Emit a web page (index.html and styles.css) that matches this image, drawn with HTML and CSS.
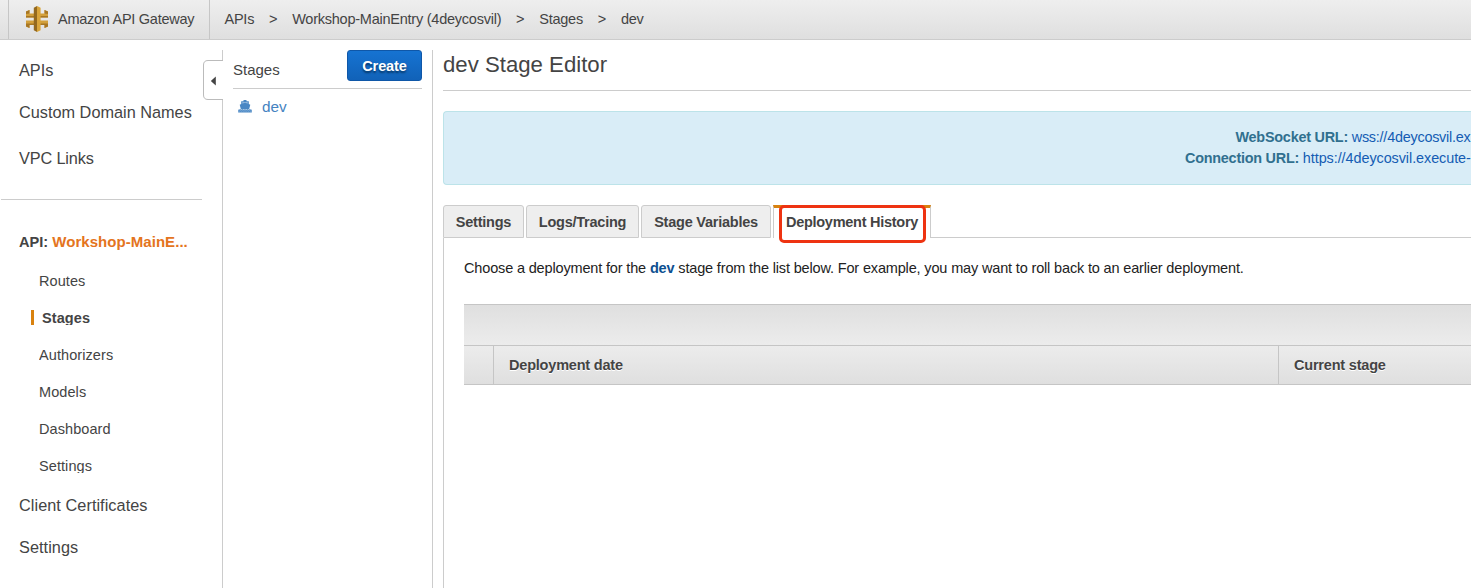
FILE: index.html
```html
<!DOCTYPE html>
<html lang="en">
<head>
<meta charset="utf-8">
<title>Amazon API Gateway</title>
<link rel="stylesheet" href="styles.css">
</head>
<body>
<header class="topbar">
  <div class="brand">
    <svg class="brand-icon" width="22" height="26" viewBox="0 0 22 26">
      <path fill="#d3a03b" d="M0 5.500L3.500 4v3.500H8V5.500h6v2h4.500V4L22 5.500v6H0z"/>
      <path fill="#a87724" d="M0 5.500L3.500 4v3.500L0 8zM22 5.500L18.500 4v3.500L22 8zM0 10h22v1.500H0z"/>
      <path fill="#d3a03b" d="M0 14.500h22v6L18.500 22v-3.500H14v2H8v-2H3.500V22L0 20.500z"/>
      <path fill="#a87724" d="M0 17.500h22v3L18.500 22v-3h-15v3L0 20.500z"/>
      <path fill="#94691f" d="M7.800 1.800L11 0v26l-3.200-1.800z"/>
      <path fill="#d9a43a" d="M11 0l3.600 1.800v22.400L11 26z"/>
    </svg>
    <span>Amazon API Gateway</span>
  </div>
  <nav class="crumbs">
    <span>APIs</span><span class="sep">&gt;</span><span>Workshop-MainEntry (4deycosvil)</span><span class="sep">&gt;</span><span>Stages</span><span class="sep">&gt;</span><span>dev</span>
  </nav>
</header>
<div class="layout">
  <aside class="sidebar">
    <a class="nav apis">APIs</a>
    <a class="nav domains">Custom Domain Names</a>
    <a class="nav links">VPC Links</a>
    <hr class="rule">
    <div class="api-name">API: <span class="orange">Workshop-MainE...</span></div>
    <ul class="sub">
      <li>Routes</li>
      <li class="current">Stages</li>
      <li>Authorizers</li>
      <li>Models</li>
      <li>Dashboard</li>
      <li>Settings</li>
    </ul>
    <a class="nav certs">Client Certificates</a>
    <a class="nav certs">Settings</a>
  </aside>
  <section class="stages">
    <svg class="collapse" width="20" height="40" viewBox="0 0 20 40">
      <path d="M20 .5H5Q.5 .5 .5 5v30Q.5 39.500 5 39.500h15" fill="#fff" stroke="#bbb"/>
      <path d="M12.800 16.500v9L7.800 21z" fill="#444"/>
    </svg>
    <div class="stages-head"><span>Stages</span><button class="create">Create</button></div>
    <div class="stage">
      <svg width="14" height="13" viewBox="0 0 14 13" fill="#4a87c4">
        <path d="M5.500 0h3v1.200h2.300V4l1.500.700L11.200 9H2.800L1.700 4.700 3.200 4V1.200h2.300z"/>
        <path d="M4.300 2.300h5.400v1.300L7 2.800l-2.700.8z" fill="#a9c8e6"/>
        <path d="M.2 9.500q.9.500 1.900-.5 1.200 1.200 2.400 0 1.200 1.200 2.500 0 1.200 1.200 2.500 0 1.200 1.200 2.400 0 1 1 1.900.5v3H.2z"/>
        <path d="M.3 11q1.100.6 2.100-.3 1.200 1 2.300 0 1.200 1 2.300 0 1.200 1 2.300 0 1.200 1 2.300 0 1 .9 2.100.3" fill="none" stroke="#a9c8e6" stroke-width=".5"/>
      </svg>
      <span>dev</span>
    </div>
  </section>
  <main class="editor">
    <h1>dev Stage Editor</h1>
    <div class="info">
      <div class="ws"><b>WebSocket URL:</b> <span>wss://4deycosvil.ex</span></div>
      <div class="conn"><b>Connection URL:</b> <span>https://4deycosvil.execute-</span></div>
    </div>
    <div class="tabs">
      <div class="tab t1">Settings</div>
      <div class="tab t2">Logs/Tracing</div>
      <div class="tab t3">Stage Variables</div>
      <div class="tab active"><span>Deployment History</span><i class="marker"></i></div>
      <div class="tab-fill"></div>
    </div>
    <div class="panel">
      <p>Choose a deployment for the <b>dev</b> stage from the list below. For example, you may want to roll back to an earlier deployment.</p>
      <div class="table">
        <div class="tools"></div>
        <div class="thead"><div></div><div>Deployment date</div><div>Current stage</div></div>
      </div>
    </div>
  </main>
</div>
</body>
</html>
```
FILE: styles.css
```css
* { box-sizing: border-box; }
body { margin: 0; height: 588px; overflow: hidden; background: #fff; color: #444; font: 14.5px/20px "Liberation Sans", Arial, sans-serif; display: flex; flex-direction: column; }
.topbar { height: 40px; flex: none; display: flex; background: linear-gradient(#eee, #dfdfdf); border-bottom: 1px solid #ccc; padding-left: 8px; font-size: 14.5px; letter-spacing: -.27px; }
.brand { width: 202px; border: 1px solid #c6c6c6; border-width: 0 1px; display: flex; align-items: flex-start; white-space: nowrap; }
.brand-icon { margin: 6px 10px 0 17px; }
.brand span, .crumbs span { line-height: 38px; white-space: nowrap; }
.crumbs { display: flex; padding-left: 14.5px; letter-spacing: -.24px; }
.crumbs .sep { width: 38px; text-align: center; }
.layout { flex: 1; display: flex; min-height: 0; }
.sidebar { width: 222px; padding: 20px 0 0 19px; flex: none; }
.nav { display: block; height: 20px; font-size: 16.3px; white-space: nowrap; }
.apis { margin-bottom: 22px; }
.domains { margin-bottom: 26px; }
.links { letter-spacing: -.15px; }
.rule { border: 0; height: 1px; background: #ccc; margin: 31px 20px 0 -18px; }
.api-name { margin-top: 32px; height: 20px; font-weight: bold; font-size: 14.6px; white-space: nowrap; }
.orange { color: #e47420; font-size: 15px; letter-spacing: .05px; }
.sub { list-style: none; margin: 21px 0 22px; padding: 0 0 0 20px; display: grid; gap: 22px; letter-spacing: .08px; }
.sub li { height: 15px; line-height: 16px; overflow: hidden; }
.current { border-left: 3px solid #d9820f; padding-left: 8px; margin-left: -8px; font-weight: bold; }
.certs { margin-bottom: 22px; letter-spacing: .05px; }
.stages { position: relative; width: 211px; flex: none; margin-top: 10px; padding: 0 10px; border: 1px solid #ccc; border-width: 0 1px; }
.collapse { position: absolute; left: -20px; top: 10px; background: #fff; }
.stages-head { height: 39px; border-bottom: 1px solid #ccc; display: flex; justify-content: space-between; font-size: 15px; line-height: 40px; }
.create { width: 75px; height: 31px; padding: 0; border: 1px solid #0f57a8; border-radius: 3px; background: linear-gradient(#1673d2, #1162b8); color: #fff; font: bold 14.5px/30px "Liberation Sans", Arial, sans-serif; letter-spacing: -.1px; text-shadow: 0 2px 2px #063766; }
.stage { display: flex; gap: 10px; padding: 8px 0 0 5px; color: #4583c1; font-size: 15.3px; }
.stage svg { margin-top: 3px; }
.editor { flex: 1; min-width: 0; margin-top: 10px; padding-left: 10px; display: flex; flex-direction: column; }
h1 { margin: 0; height: 41px; border-bottom: 1px solid #ccc; font-size: 22.2px; font-weight: normal; line-height: 29px; }
.info { margin-top: 20px; height: 74px; flex: none; border: 1px solid #bce3e9; border-right: 0; border-radius: 4px 0 0 4px; background: #d9edf7; padding-top: 15px; color: #31708f; font-size: 14.4px; line-height: 21px; letter-spacing: -.23px; white-space: nowrap; overflow: hidden; }
.info span { color: #145cb3; }
.ws { padding-left: 791.5px; }
.conn { padding-left: 741px; }
.conn span { letter-spacing: -.06px; }
.tabs { display: flex; height: 33px; margin-top: 20px; flex: none; letter-spacing: -.23px; }
.tab { height: 33px; margin-right: 2px; border: 1px solid #ccc; border-radius: 3px 3px 0 0; background: #eee; text-align: center; line-height: 32px; font-weight: bold; white-space: nowrap; box-shadow: 2px 32px 0 -31px #ccc; }
.t1 { width: 81px; }
.t2 { width: 113px; }
.t3 { width: 130px; }
.active { position: relative; width: 158px; margin: 0; background: #fff; border-top: 3px solid #d9820f; border-bottom: 0; border-radius: 0; line-height: 28px; box-shadow: none; letter-spacing: -.27px; }
.marker { position: absolute; left: 5px; top: -3px; width: 147px; height: 38px; border: 3px solid #ee3311; border-radius: 5px; }
.tab-fill { flex: 1; border-bottom: 1px solid #ccc; }
.panel { flex: 1; border-left: 1px solid #ccc; padding: 20px 0 0 20px; }
.panel p { margin: 0; color: #222; white-space: nowrap; letter-spacing: -.155px; }
.panel p b { color: #0d4f91; }
.table { margin-top: 26px; border: 1px solid #c5c5c5; border-width: 1px 0; }
.tools { height: 40px; background: linear-gradient(#dfdfdf, #ececec); }
.thead { display: grid; grid-template-columns: 30px 785px 1fr; height: 39px; border-top: 1px solid #c5c5c5; background: linear-gradient(#ececec, #dfdfdf); font-weight: bold; line-height: 38px; letter-spacing: -.2px; text-shadow: 0 1px #fff; }
.thead div { border-right: 1px solid #c5c5c5; padding-left: 15px; }
.thead div:last-child { border: 0; }
```
